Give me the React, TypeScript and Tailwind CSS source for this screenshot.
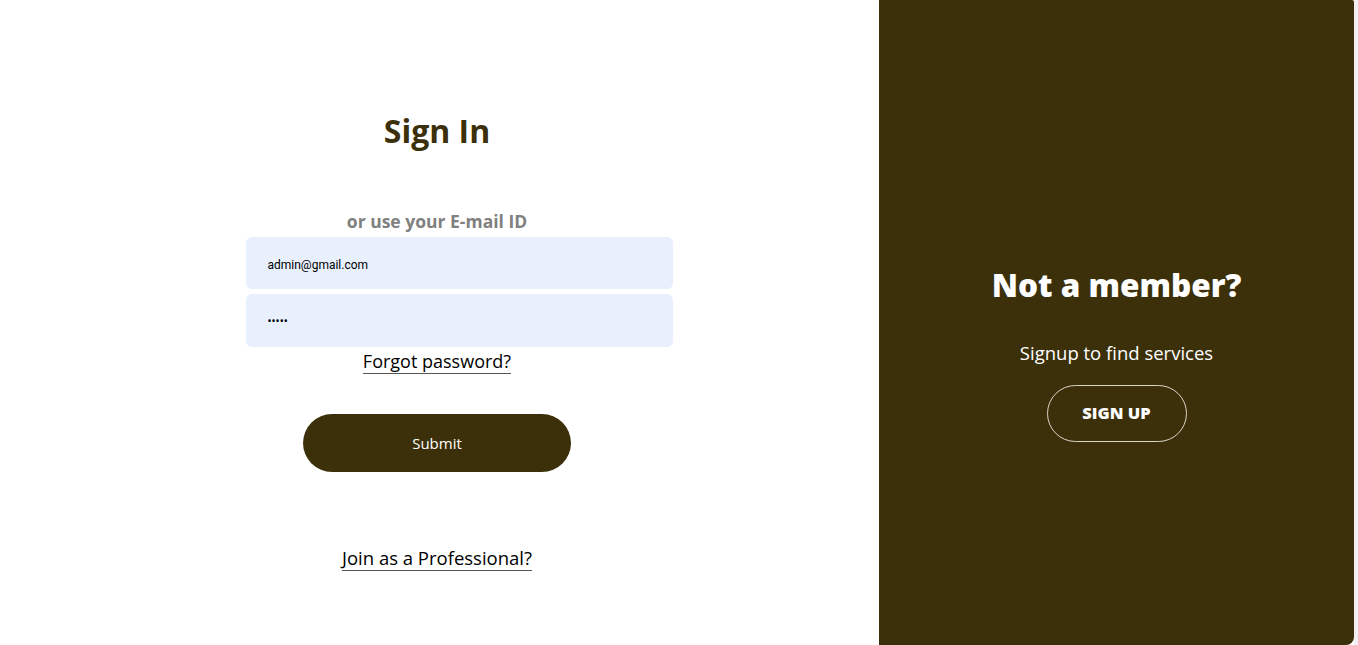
import React from "react";

const font = { fontFamily: "'Open Sans', 'Noto Sans', sans-serif" };

export default function App() {
  return (
    <div className="flex h-[645px] w-full overflow-hidden bg-white" style={font}>
      <div className="flex w-[874px] shrink-0 flex-col items-center">
        <h1 className="mt-[111px] text-[32px] font-bold leading-[40px] text-[#3c300a]">Sign In</h1>
        <p className="mt-[58px] text-[17.5px] font-bold leading-[24px] text-[#808080]">or use your E-mail ID</p>
        <input
          readOnly
          value="admin@gmail.com"
          className="ml-[44px] mt-[4px] h-[52px] w-[427px] rounded-md bg-[#e8f0fe] pl-[22px] pt-[3px] text-[12px] text-black outline-none"
          style={{ fontFamily: "Roboto, 'Liberation Sans', sans-serif" }}
        />
        <input
          readOnly
          type="password"
          value="12345"
          className="ml-[44px] mt-[5px] h-[53px] w-[427px] rounded-md bg-[#e8f0fe] pl-[22px] text-[12px] text-black outline-none"
          style={{ fontFamily: "Roboto, 'Liberation Sans', sans-serif" }}
        />
        <a className="mt-[2px] border-b border-[#555] text-[18px] leading-[24px] text-black">Forgot password?</a>
        <button className="mt-[40px] h-[58px] w-[268px] rounded-full bg-[#3c300a] text-[15px] font-medium text-white">
          Submit
        </button>
        <a className="mt-[74px] border-b border-[#555] text-[18.5px] leading-[24px] text-black">Join as a Professional?</a>
      </div>
      <div className="flex-1" />
      <div className="flex w-[475px] shrink-0 flex-col items-center rounded-br-lg rounded-tr-[2px] bg-[#3c300a] pt-[265px]">
        <h2 className="text-[31.5px] font-extrabold leading-[40px] text-white">Not a member?</h2>
        <p className="mt-[36px] text-[18.5px] leading-[24px] text-white">Signup to find services</p>
        <button className="mt-[20px] h-[57px] w-[140px] rounded-full border border-[#d8d4c8] text-[16.5px] font-extrabold text-white">
          SIGN UP
        </button>
      </div>
      <div className="w-[4px] shrink-0 bg-[#f1f1f1]" />
    </div>
  );
}
